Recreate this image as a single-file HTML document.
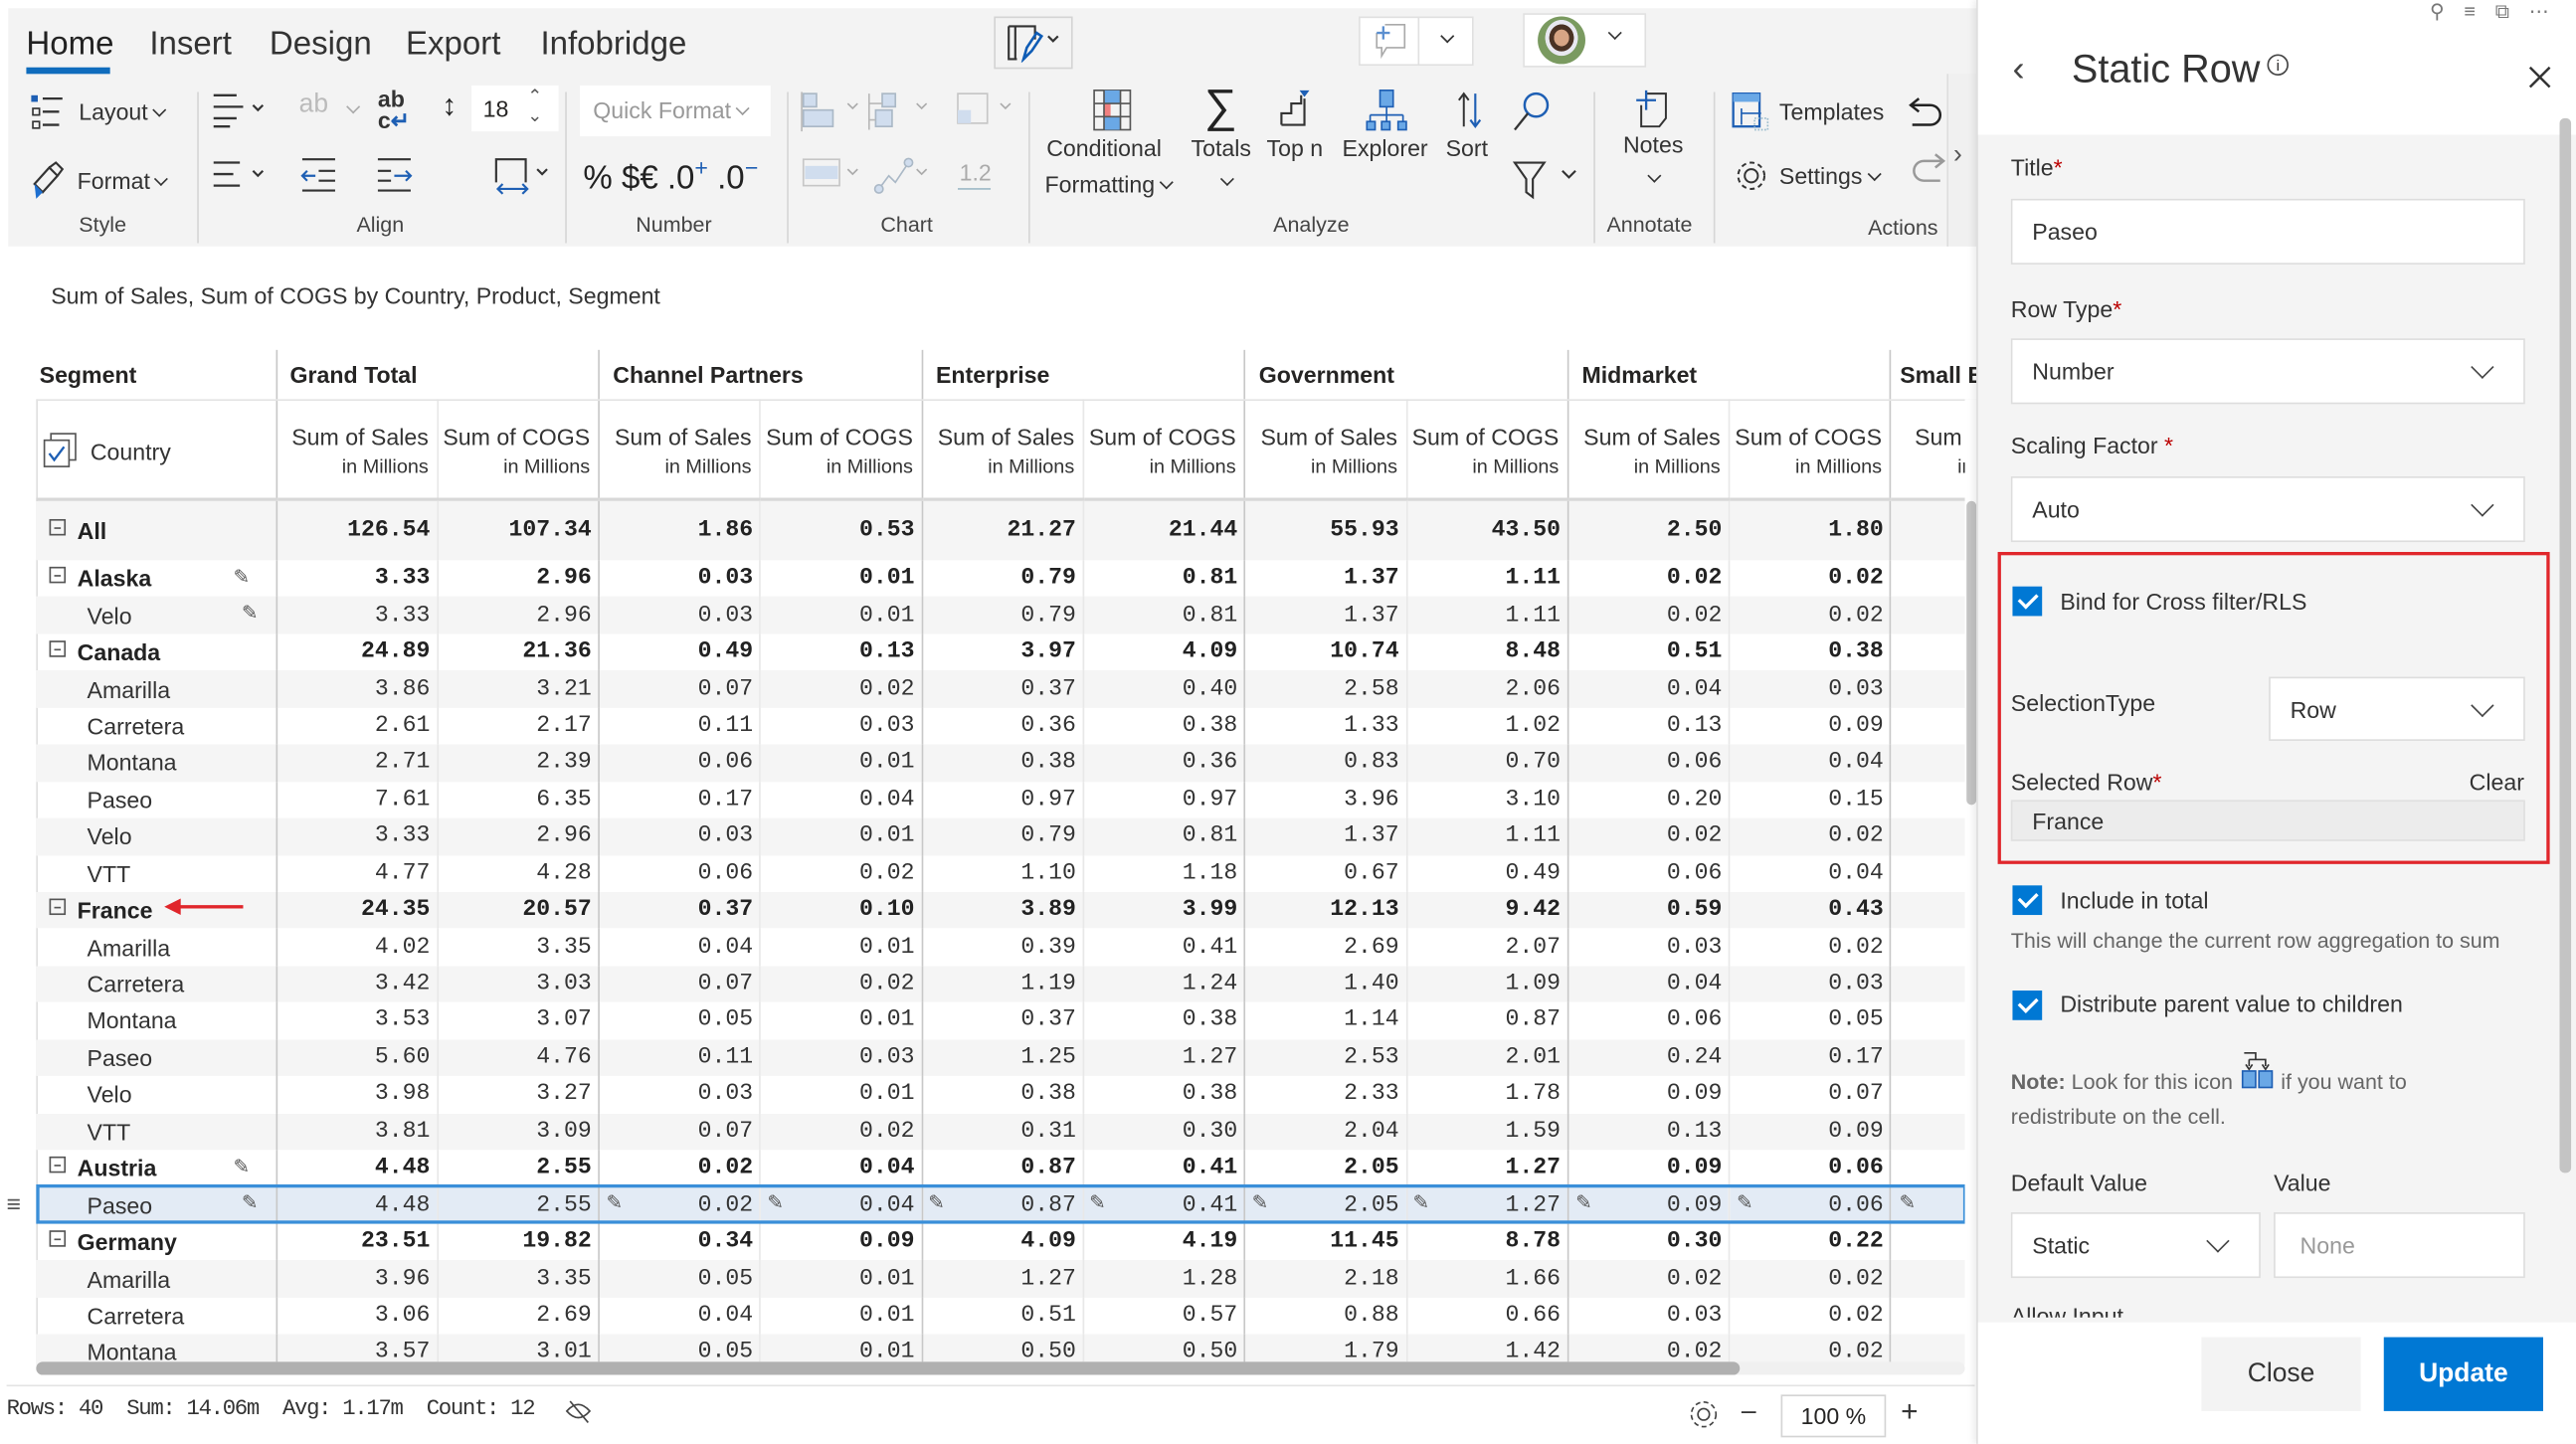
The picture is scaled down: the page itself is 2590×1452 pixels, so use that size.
<!DOCTYPE html>
<html><head><meta charset="utf-8">
<style>
*{box-sizing:border-box;margin:0;padding:0}
html,body{width:2590px;height:1452px;overflow:hidden;background:#fff}
#s{position:absolute;left:0;top:0;width:1568px;height:879px;transform:scale(1.6518);transform-origin:0 0;font-family:"Liberation Sans",sans-serif;color:#252423;background:#fff;overflow:hidden}
.a{position:absolute;white-space:nowrap}
.lbl{font-size:13px;color:#333}
.gl{font-size:13px;color:#444}
.sep{position:absolute;width:1px;background:#d6d6d6;top:56px;height:92px}
.chev{display:inline-block;width:6px;height:6px;border-right:1.3px solid #333;border-bottom:1.3px solid #333;transform:rotate(45deg);margin-left:4px;vertical-align:3px}
table{border-collapse:collapse;table-layout:fixed;position:absolute;left:22px;top:213px}
td{height:22.45px;padding:0 4px 0 0;text-align:right;font-family:"Liberation Mono",monospace;font-size:14px;color:#333;border-left:1px solid #e8e8e8;overflow:hidden;white-space:nowrap}
td.g{border-left:1px solid #c8c8c8}
td.n{text-align:left;font-family:"Liberation Sans",sans-serif;padding-left:31px;border-left:none}
tr.b td{font-weight:bold;color:#222}
tr.b td.n{padding-left:25px}
tr.z td{background:#f5f5f5}
.bx{position:absolute;left:8px;width:10px;height:10px;border:1px solid #555;margin-top:-7px}
.bx:after{content:"";position:absolute;left:2px;top:4px;width:4px;height:1px;background:#555}
td.n{position:relative}
.pen{position:absolute;font-size:12px;color:#555;font-family:"DejaVu Sans",sans-serif;font-weight:normal}
th{font-weight:bold;text-align:left;font-size:14px;height:30px;padding-left:8px;border-left:1px solid #c8c8c8;border-bottom:1px solid #e3e3e3;white-space:nowrap;overflow:hidden}
.sh td{height:61px;font-family:"Liberation Sans",sans-serif;font-size:14px;line-height:17px;border-bottom:2px solid #d8d8d8;vertical-align:middle;padding-right:5px;padding-top:4px}
.sh small{font-size:12px}
.pl{position:absolute;left:1224px;font-size:14px;color:#333}
.req{color:#b00}
.inp{position:absolute;background:#fff;border:1px solid #ddd;font-size:14px;padding-left:12px;display:flex;align-items:center;color:#333}
.dd:after{content:"";position:absolute;right:20px;top:50%;width:9px;height:9px;border-right:1.3px solid #444;border-bottom:1.3px solid #444;transform:translateY(-75%) rotate(45deg)}
.cb{position:absolute;left:1225px;width:18px;height:18px;background:#0078d4}
.cb:after{content:"";position:absolute;left:6px;top:2px;width:5px;height:9px;border-right:2.2px solid #fff;border-bottom:2.2px solid #fff;transform:rotate(45deg)}
</style></head><body><div id="s">

<div class="a" style="left:5px;top:5px;width:1198px;height:145px;background:#f3f3f3"></div>
<div class="a" style="left:16px;top:16px;font-size:20px;color:#222">Home</div>
<div class="a" style="left:16px;top:41px;width:51px;height:4px;background:#0f6cbd"></div>
<div class="a" style="left:91px;top:16px;font-size:20px;color:#333">Insert</div>
<div class="a" style="left:164px;top:16px;font-size:20px;color:#333">Design</div>
<div class="a" style="left:247px;top:16px;font-size:20px;color:#333">Export</div>
<div class="a" style="left:329px;top:16px;font-size:20px;color:#333">Infobridge</div>

<div class="a" style="left:605px;top:10px;width:48px;height:32px;border:1px solid #d4d4d4"></div>
<svg class="a" style="left:613px;top:14px" width="36" height="24"><path d="M1 2h16v8M1 2v20h5M5 2v20" stroke="#333" fill="none" stroke-width="1.3"/><path d="M10 22l2-7 6-9 3 2-6 9z" stroke="#0f5cb5" fill="none" stroke-width="1.6"/><path d="M25 8l3 3 3-3" stroke="#333" fill="none" stroke-width="1.3"/></svg>
<div class="a" style="left:827px;top:10px;width:70px;height:30px;background:#fff;border:1px solid #e0e0e0"></div>
<div class="a" style="left:863px;top:10px;width:1px;height:30px;background:#e0e0e0"></div>
<svg class="a" style="left:834px;top:13px" width="24" height="24"><path d="M9 2h12v14H10l-3 5v-5H4V7" stroke="#aaa" fill="none"/><path d="M8 3v8M4 7h8" stroke="#5b8fd0" stroke-width="1.4"/></svg>
<span class="chev a" style="left:874px;top:19px"></span>
<div class="a" style="left:927px;top:8px;width:75px;height:33px;background:#fff;border:1px solid #e0e0e0"></div>
<div class="a" style="left:936px;top:10px;width:29px;height:29px;border-radius:50%;background:radial-gradient(ellipse at 50% 45%,#d7a585 0 22%,#4a3224 23% 36%,#e8e8f0 37% 48%,#7a9a60 49%)"></div>
<span class="chev a" style="left:976px;top:17px"></span>

<svg class="a" style="left:18px;top:57px" width="24" height="22"><rect x="1" y="1" width="4" height="4" fill="#1e5fb4"/><path d="M8 3h12M8 11h10M8 19h10" stroke="#333" stroke-width="1.4"/><rect x="2" y="9" width="4" height="4" fill="none" stroke="#333"/><rect x="2" y="17" width="4" height="4" fill="none" stroke="#333"/></svg>
<div class="a lbl" style="left:48px;top:60px;font-size:14px">Layout<span class="chev"></span></div>
<svg class="a" style="left:18px;top:98px" width="22" height="24"><path d="M3 14l9-10 5 5-9 10z" fill="none" stroke="#333" stroke-width="1.3"/><path d="M3 14l5 5-4 4z" fill="#1e6fd0"/><path d="M12 4l4-3 4 4-3 4" fill="none" stroke="#333" stroke-width="1.3"/></svg>
<div class="a lbl" style="left:47px;top:102px;font-size:14px">Format<span class="chev"></span></div>
<div class="a gl" style="left:48px;top:129px">Style</div>
<div class="sep" style="left:120px"></div>
<svg class="a" style="left:128px;top:56px" width="40" height="22"><path d="M2 2h14M2 9h18M2 16h14M2 21h10" stroke="#333" stroke-width="1.4"/><path d="M26 8l3 3 3-3" stroke="#333" fill="none" stroke-width="1.3"/></svg>
<div class="a" style="left:182px;top:55px;font-size:16px;color:#bbb">ab</div><span class="a chev" style="left:208px;top:62px;border-color:#aaa"></span>
<div class="a" style="left:230px;top:54px;font-size:14px;color:#333;line-height:13px;font-weight:bold">ab<br>c<span style="color:#1e5fb4">↵</span></div>
<div class="a" style="left:269px;top:54px;font-size:18px;color:#222">↕</div>
<div class="a" style="left:287px;top:52px;width:53px;height:28px;background:#fff"></div>
<div class="a" style="left:294px;top:58px;font-size:14px">18</div>
<div class="a" style="left:321px;top:53px;font-size:11px;color:#555;line-height:12px">⌃<br>⌄</div>
<svg class="a" style="left:128px;top:97px" width="40" height="20"><path d="M2 2h16M2 9h12M2 16h16" stroke="#333" stroke-width="1.4"/><path d="M26 7l3 3 3-3" stroke="#333" fill="none" stroke-width="1.3"/></svg>
<svg class="a" style="left:182px;top:95px" width="24" height="24"><path d="M2 2h20M12 9h10M12 15h10M2 21h20" stroke="#333" stroke-width="1.3"/><path d="M10 12H2m3-3l-3 3 3 3" stroke="#1e5fb4" fill="none" stroke-width="1.3"/></svg>
<svg class="a" style="left:228px;top:95px" width="24" height="24"><path d="M2 2h20M2 9h8M2 15h8M2 21h20" stroke="#333" stroke-width="1.3"/><path d="M12 12h10m-3-3l3 3-3 3" stroke="#1e5fb4" fill="none" stroke-width="1.3"/></svg>
<svg class="a" style="left:300px;top:95px" width="40" height="26"><path d="M2 16V2h18v14" stroke="#333" fill="none" stroke-width="1.3"/><path d="M3 20h18m-15-3l-3 3 3 3m12-6l3 3-3 3" stroke="#1e5fb4" fill="none" stroke-width="1.3"/><path d="M27 8l3 3 3-3" stroke="#333" fill="none" stroke-width="1.3"/></svg>
<div class="a gl" style="left:217px;top:129px">Align</div>
<div class="sep" style="left:344px"></div>
<div class="a" style="left:353px;top:52px;width:116px;height:31px;background:#fff"></div>
<div class="a" style="left:361px;top:59px;font-size:14px;color:#999">Quick Format<span class="chev" style="border-color:#999"></span></div>
<div class="a" style="left:355px;top:94px;font-size:20px;color:#222">% $€ .0<sup style="color:#1e5fb4;font-size:14px">+</sup> .0<sup style="color:#1e5fb4;font-size:14px">−</sup></div>
<div class="a gl" style="left:387px;top:129px">Number</div>
<div class="sep" style="left:479px"></div>
<svg class="a" style="left:487px;top:55px" width="135" height="26" opacity=".8"><rect x="2" y="2" width="8" height="8" fill="#c8d8ee" stroke="#9ab"/><rect x="2" y="12" width="18" height="10" fill="#c8d8ee" stroke="#9ab"/><path d="M1 1v24" stroke="#aaa"/><path d="M29 8l3 3 3-3M71 8l3 3 3-3M122 8l3 3 3-3" stroke="#999" fill="none"/><rect x="50" y="2" width="8" height="8" fill="#c8d8ee" stroke="#9ab"/><rect x="46" y="12" width="10" height="10" fill="#c8d8ee" stroke="#9ab"/><path d="M42 2v22M42 8h8M42 18h4" stroke="#aaa"/><rect x="96" y="2" width="18" height="18" fill="none" stroke="#bbb"/><rect x="96" y="12" width="8" height="8" fill="#c8d8ee"/></svg>
<svg class="a" style="left:487px;top:95px" width="125" height="26" opacity=".8"><rect x="2" y="2" width="22" height="16" fill="none" stroke="#bbb"/><rect x="3" y="6" width="20" height="8" fill="#c8d8ee"/><path d="M29 8l3 3 3-3M71 8l3 3 3-3" stroke="#999" fill="none"/><path d="M48 20l6-8 4 4 8-12" stroke="#9ab" fill="none"/><circle cx="48" cy="20" r="2.5" fill="#c8d8ee" stroke="#9ab"/><circle cx="66" cy="4" r="2.5" fill="#c8d8ee" stroke="#9ab"/><text x="97" y="15" font-size="14" fill="#999" font-family="Liberation Sans">1.2</text><path d="M96 20h20" stroke="#8ab"/></svg>
<div class="a gl" style="left:536px;top:129px">Chart</div>
<div class="sep" style="left:626px"></div>
<svg class="a" style="left:665px;top:54px" width="24" height="26"><rect x="1" y="1" width="22" height="24" fill="none" stroke="#555"/><rect x="7" y="1" width="10" height="8" fill="#6aa8e6"/><rect x="7" y="17" width="10" height="8" fill="#6aa8e6"/><rect x="7" y="9" width="4" height="8" fill="#f08080"/><path d="M1 9h22M1 17h22M7 1v24M17 1v24" stroke="#555"/></svg>
<div class="a lbl" style="left:637px;top:82px;font-size:14px">Conditional</div>
<div class="a lbl" style="left:636px;top:104px;font-size:14px">Formatting<span class="chev"></span></div>
<div class="a" style="left:733px;top:50px;font-size:28px;color:#222;line-height:30px">∑</div>
<div class="a lbl" style="left:725px;top:82px;font-size:14px">Totals</div><span class="a chev" style="left:740px;top:106px"></span>
<svg class="a" style="left:777px;top:54px" width="24" height="26"><path d="M3 22V15h6V9h6V4" stroke="#333" fill="none" stroke-width="1.3"/><path d="M3 22h14V6" stroke="#333" fill="none" stroke-width="1.3"/><path d="M14 1h6l-3 4z" fill="#1e5fb4"/></svg>
<div class="a lbl" style="left:771px;top:82px;font-size:14px">Top n</div>
<svg class="a" style="left:831px;top:54px" width="26" height="26"><rect x="9" y="1" width="8" height="10" fill="#6aa8e6" stroke="#1e5fb4"/><path d="M13 11v5M3 16h20M3 16v4M13 16v4M23 16v4" stroke="#1e5fb4"/><rect x="1" y="20" width="5" height="5" fill="#6aa8e6" stroke="#1e5fb4"/><rect x="10" y="20" width="5" height="5" fill="#6aa8e6" stroke="#1e5fb4"/><rect x="20" y="20" width="5" height="5" fill="#6aa8e6" stroke="#1e5fb4"/></svg>
<div class="a lbl" style="left:817px;top:82px;font-size:14px">Explorer</div>
<svg class="a" style="left:885px;top:55px" width="20" height="24"><path d="M6 22V2M3 6l3-4 3 4" stroke="#333" fill="none" stroke-width="1.2"/><path d="M13 2v20M10 18l3 4 3-4" stroke="#1e5fb4" fill="none" stroke-width="1.3"/></svg>
<div class="a lbl" style="left:880px;top:82px;font-size:14px">Sort</div>
<svg class="a" style="left:920px;top:55px" width="24" height="26"><circle cx="15" cy="9" r="7" fill="none" stroke="#1e5fb4" stroke-width="1.5"/><path d="M10 14L2 24" stroke="#333" stroke-width="1.4"/></svg>
<svg class="a" style="left:920px;top:96px" width="44" height="26"><path d="M2 3h18l-7 10v11l-4-3v-8z" fill="none" stroke="#333" stroke-width="1.3"/><path d="M31 8l4 4 4-4" stroke="#333" fill="none" stroke-width="1.3"/></svg>
<div class="a gl" style="left:775px;top:129px">Analyze</div>
<div class="sep" style="left:970px"></div>
<svg class="a" style="left:995px;top:54px" width="22" height="26"><path d="M7 3h12v15l-4 5H4V10" stroke="#333" fill="none" stroke-width="1.2"/><path d="M7 1v12M1 7h12" stroke="#1e5fb4" stroke-width="1.4"/></svg>
<div class="a lbl" style="left:988px;top:80px;font-size:14px">Notes</div><span class="a chev" style="left:1000px;top:104px"></span>
<div class="a gl" style="left:978px;top:129px">Annotate</div>
<div class="sep" style="left:1043px"></div>
<svg class="a" style="left:1054px;top:56px" width="24" height="24"><rect x="1" y="1" width="16" height="20" fill="none" stroke="#1e5fb4" stroke-width="1.4"/><rect x="1" y="1" width="16" height="5" fill="#6aa8e6"/><path d="M6 10v10M6 13h12" stroke="#1e5fb4"/><path d="M14 16h8v7h-8z" fill="none" stroke="#9bc" stroke-dasharray="1 1"/></svg>
<div class="a lbl" style="left:1083px;top:60px;font-size:14px">Templates</div>
<svg class="a" style="left:1055px;top:96px" width="22" height="22"><circle cx="11" cy="11" r="4" fill="none" stroke="#333" stroke-width="1.2"/><circle cx="11" cy="11" r="8" fill="none" stroke="#333" stroke-width="1.2" stroke-dasharray="3 2.2"/></svg>
<div class="a lbl" style="left:1083px;top:99px;font-size:14px">Settings<span class="chev"></span></div>
<svg class="a" style="left:1160px;top:56px" width="26" height="62"><path d="M8 4L3 8l5 4M3 8h12a6 6 0 0 1 0 12H4" stroke="#222" fill="none" stroke-width="1.5"/><path d="M18 38l5 4-5 4M23 42H11a6 6 0 0 0 0 12h10" stroke="#999" fill="none" stroke-width="1.5"/></svg>
<div class="a gl" style="left:1137px;top:131px">Actions</div>
<div class="a" style="left:1185px;top:45px;width:18px;height:105px;background:#f0f0f0;border-left:1px solid #ddd"></div>
<div class="a" style="left:1189px;top:86px;font-size:16px;color:#555">›</div>

<div class="a" style="left:31px;top:172px;font-size:14px;color:#333">Sum of Sales, Sum of COGS by Country, Product, Segment</div>

<div class="a" style="left:22px;top:243px;width:1px;height:588px;background:#e0e0e0"></div>
<table>
<colgroup><col style="width:146px"><col style="width:98.3px"><col style="width:98.3px"><col style="width:98.3px"><col style="width:98.3px"><col style="width:98.3px"><col style="width:98.3px"><col style="width:98.3px"><col style="width:98.3px"><col style="width:98.3px"><col style="width:98.3px"><col style="width:60px"></colgroup>
<tr><th style="border-left:none;padding-left:2px">Segment</th><th colspan="2">Grand Total</th><th colspan="2">Channel Partners</th><th colspan="2">Enterprise</th><th colspan="2">Government</th><th colspan="2">Midmarket</th><th style="padding-left:5px">Small B</th></tr>
<tr class="sh"><td class="n" style="padding-left:33px;font-size:14px;border-bottom:2px solid #d8d8d8"><svg style="position:absolute;left:4px;top:19px" width="22" height="24"><rect x="5" y="1" width="15" height="16" fill="#fff" stroke="#555"/><rect x="1" y="5" width="15" height="16" fill="#fff" stroke="#555"/><path d="M4 13l3 4 6-8" stroke="#1e5fb4" fill="none" stroke-width="1.4"/></svg>Country</td>
<td class="g">Sum of Sales<br><small>in Millions</small></td><td>Sum of COGS<br><small>in Millions</small></td>
<td class="g">Sum of Sales<br><small>in Millions</small></td><td>Sum of COGS<br><small>in Millions</small></td>
<td class="g">Sum of Sales<br><small>in Millions</small></td><td>Sum of COGS<br><small>in Millions</small></td>
<td class="g">Sum of Sales<br><small>in Millions</small></td><td>Sum of COGS<br><small>in Millions</small></td>
<td class="g">Sum of Sales<br><small>in Millions</small></td><td>Sum of COGS<br><small>in Millions</small></td>
<td class="g" style="text-align:left;padding-left:14px">Sum o<br><small style="padding-left:26px">in</small></td></tr>
<tr class="b z"><td class="n" style="height:37px"><span class="bx" style="top:50%"></span>All</td><td class="g">126.54</td><td>107.34</td><td class="g">1.86</td><td>0.53</td><td class="g">21.27</td><td>21.44</td><td class="g">55.93</td><td>43.50</td><td class="g">2.50</td><td>1.80</td><td class="g"></td></tr>
<tr class="b"><td class="n"><span class="bx" style="top:50%"></span>Alaska<span class="pen" style="left:120px;top:3px">✎</span></td><td class="g">3.33</td><td>2.96</td><td class="g">0.03</td><td>0.01</td><td class="g">0.79</td><td>0.81</td><td class="g">1.37</td><td>1.11</td><td class="g">0.02</td><td>0.02</td><td class="g"></td></tr>
<tr class="z"><td class="n">Velo<span class="pen" style="left:125px;top:3px">✎</span></td><td class="g">3.33</td><td>2.96</td><td class="g">0.03</td><td>0.01</td><td class="g">0.79</td><td>0.81</td><td class="g">1.37</td><td>1.11</td><td class="g">0.02</td><td>0.02</td><td class="g"></td></tr>
<tr class="b"><td class="n"><span class="bx" style="top:50%"></span>Canada</td><td class="g">24.89</td><td>21.36</td><td class="g">0.49</td><td>0.13</td><td class="g">3.97</td><td>4.09</td><td class="g">10.74</td><td>8.48</td><td class="g">0.51</td><td>0.38</td><td class="g"></td></tr>
<tr class="z"><td class="n">Amarilla</td><td class="g">3.86</td><td>3.21</td><td class="g">0.07</td><td>0.02</td><td class="g">0.37</td><td>0.40</td><td class="g">2.58</td><td>2.06</td><td class="g">0.04</td><td>0.03</td><td class="g"></td></tr>
<tr><td class="n">Carretera</td><td class="g">2.61</td><td>2.17</td><td class="g">0.11</td><td>0.03</td><td class="g">0.36</td><td>0.38</td><td class="g">1.33</td><td>1.02</td><td class="g">0.13</td><td>0.09</td><td class="g"></td></tr>
<tr class="z"><td class="n">Montana</td><td class="g">2.71</td><td>2.39</td><td class="g">0.06</td><td>0.01</td><td class="g">0.38</td><td>0.36</td><td class="g">0.83</td><td>0.70</td><td class="g">0.06</td><td>0.04</td><td class="g"></td></tr>
<tr><td class="n">Paseo</td><td class="g">7.61</td><td>6.35</td><td class="g">0.17</td><td>0.04</td><td class="g">0.97</td><td>0.97</td><td class="g">3.96</td><td>3.10</td><td class="g">0.20</td><td>0.15</td><td class="g"></td></tr>
<tr class="z"><td class="n">Velo</td><td class="g">3.33</td><td>2.96</td><td class="g">0.03</td><td>0.01</td><td class="g">0.79</td><td>0.81</td><td class="g">1.37</td><td>1.11</td><td class="g">0.02</td><td>0.02</td><td class="g"></td></tr>
<tr><td class="n">VTT</td><td class="g">4.77</td><td>4.28</td><td class="g">0.06</td><td>0.02</td><td class="g">1.10</td><td>1.18</td><td class="g">0.67</td><td>0.49</td><td class="g">0.06</td><td>0.04</td><td class="g"></td></tr>
<tr class="b z"><td class="n"><span class="bx" style="top:50%"></span>France</td><td class="g">24.35</td><td>20.57</td><td class="g">0.37</td><td>0.10</td><td class="g">3.89</td><td>3.99</td><td class="g">12.13</td><td>9.42</td><td class="g">0.59</td><td>0.43</td><td class="g"></td></tr>
<tr><td class="n">Amarilla</td><td class="g">4.02</td><td>3.35</td><td class="g">0.04</td><td>0.01</td><td class="g">0.39</td><td>0.41</td><td class="g">2.69</td><td>2.07</td><td class="g">0.03</td><td>0.02</td><td class="g"></td></tr>
<tr class="z"><td class="n">Carretera</td><td class="g">3.42</td><td>3.03</td><td class="g">0.07</td><td>0.02</td><td class="g">1.19</td><td>1.24</td><td class="g">1.40</td><td>1.09</td><td class="g">0.04</td><td>0.03</td><td class="g"></td></tr>
<tr><td class="n">Montana</td><td class="g">3.53</td><td>3.07</td><td class="g">0.05</td><td>0.01</td><td class="g">0.37</td><td>0.38</td><td class="g">1.14</td><td>0.87</td><td class="g">0.06</td><td>0.05</td><td class="g"></td></tr>
<tr class="z"><td class="n">Paseo</td><td class="g">5.60</td><td>4.76</td><td class="g">0.11</td><td>0.03</td><td class="g">1.25</td><td>1.27</td><td class="g">2.53</td><td>2.01</td><td class="g">0.24</td><td>0.17</td><td class="g"></td></tr>
<tr><td class="n">Velo</td><td class="g">3.98</td><td>3.27</td><td class="g">0.03</td><td>0.01</td><td class="g">0.38</td><td>0.38</td><td class="g">2.33</td><td>1.78</td><td class="g">0.09</td><td>0.07</td><td class="g"></td></tr>
<tr class="z"><td class="n">VTT</td><td class="g">3.81</td><td>3.09</td><td class="g">0.07</td><td>0.02</td><td class="g">0.31</td><td>0.30</td><td class="g">2.04</td><td>1.59</td><td class="g">0.13</td><td>0.09</td><td class="g"></td></tr>
<tr class="b"><td class="n"><span class="bx" style="top:50%"></span>Austria<span class="pen" style="left:120px;top:3px">✎</span></td><td class="g">4.48</td><td>2.55</td><td class="g">0.02</td><td>0.04</td><td class="g">0.87</td><td>0.41</td><td class="g">2.05</td><td>1.27</td><td class="g">0.09</td><td>0.06</td><td class="g"></td></tr>
<tr class="sel"><td class="n" style="background:#e3ebf5">Paseo<span class="pen" style="left:125px;top:3px">✎</span></td><td class="g" style="background:#e3ebf5">4.48</td><td style="background:#e3ebf5">2.55</td><td class="g" style="background:#e3ebf5">0.02</td><td style="background:#e3ebf5">0.04</td><td class="g" style="background:#e3ebf5">0.87</td><td style="background:#e3ebf5">0.41</td><td class="g" style="background:#e3ebf5">2.05</td><td style="background:#e3ebf5">1.27</td><td class="g" style="background:#e3ebf5">0.09</td><td style="background:#e3ebf5">0.06</td><td class="g" style="background:#e3ebf5"></td></tr>
<tr class="b"><td class="n"><span class="bx" style="top:50%"></span>Germany</td><td class="g">23.51</td><td>19.82</td><td class="g">0.34</td><td>0.09</td><td class="g">4.09</td><td>4.19</td><td class="g">11.45</td><td>8.78</td><td class="g">0.30</td><td>0.22</td><td class="g"></td></tr>
<tr class="z"><td class="n">Amarilla</td><td class="g">3.96</td><td>3.35</td><td class="g">0.05</td><td>0.01</td><td class="g">1.27</td><td>1.28</td><td class="g">2.18</td><td>1.66</td><td class="g">0.02</td><td>0.02</td><td class="g"></td></tr>
<tr><td class="n">Carretera</td><td class="g">3.06</td><td>2.69</td><td class="g">0.04</td><td>0.01</td><td class="g">0.51</td><td>0.57</td><td class="g">0.88</td><td>0.66</td><td class="g">0.03</td><td>0.02</td><td class="g"></td></tr>
<tr class="z"><td class="n">Montana</td><td class="g">3.57</td><td>3.01</td><td class="g">0.05</td><td>0.01</td><td class="g">0.50</td><td>0.50</td><td class="g">1.79</td><td>1.42</td><td class="g">0.02</td><td>0.02</td><td class="g"></td></tr>
</table>
<div class="a" style="left:22px;top:721px;width:1175px;height:24px;border:2px solid #3a8fd9"></div>
<div class="a" style="left:4px;top:725px;font-size:15px;color:#555">≡</div>
<span class="a pen" style="left:369px;top:725px">✎</span><span class="a pen" style="left:467px;top:725px">✎</span><span class="a pen" style="left:565px;top:725px">✎</span><span class="a pen" style="left:663px;top:725px">✎</span><span class="a pen" style="left:762px;top:725px">✎</span><span class="a pen" style="left:860px;top:725px">✎</span><span class="a pen" style="left:959px;top:725px">✎</span><span class="a pen" style="left:1057px;top:725px">✎</span><span class="a pen" style="left:1156px;top:725px">✎</span>
<svg class="a" style="left:98px;top:545px" width="52" height="14"><path d="M50 7H10" stroke="#e0262b" stroke-width="2"/><path d="M2 7l10-5v10z" fill="#e0262b"/></svg>
<div class="a" style="left:1196px;top:243px;width:9px;height:600px;background:#fff"></div>
<div class="a" style="left:1197px;top:305px;width:6px;height:185px;background:#c4c4c4;border-radius:3px"></div>
<div class="a" style="left:22px;top:831px;width:1175px;height:12px;background:#fff"></div>
<div class="a" style="left:22px;top:829px;width:1174px;height:8px;background:#f0f0f0;border-radius:4px"></div>
<div class="a" style="left:22px;top:829px;width:1037px;height:8px;background:#b0b0b0;border-radius:4px"></div>
<div class="a" style="left:4px;top:843px;width:1198px;height:1px;background:#e4e4e4"></div>
<div class="a" style="left:4px;top:851px;font-size:13.5px;color:#333;font-family:'Liberation Mono',monospace;letter-spacing:-0.8px">Rows: 40 &nbsp;Sum: 14.06m &nbsp;Avg: 1.17m &nbsp;Count: 12</div>
<svg class="a" style="left:344px;top:852px" width="16" height="15"><path d="M1 7q7-8 14 0q-7 8-14 0z" fill="none" stroke="#444"/><path d="M3 1l11 13" stroke="#444"/></svg>
<svg class="a" style="left:1027px;top:851px" width="20" height="20"><circle cx="10" cy="10" r="3.5" fill="none" stroke="#444"/><circle cx="10" cy="10" r="7.5" fill="none" stroke="#444" stroke-dasharray="3 2"/></svg>
<div class="a" style="left:1060px;top:851px;font-size:16px;color:#333">–</div>
<div class="a" style="left:1084px;top:849px;width:64px;height:26px;border:1px solid #d4d4d4;font-size:14px;text-align:center;line-height:24px">100 %</div>
<div class="a" style="left:1157px;top:849px;font-size:18px;color:#333">+</div>

<div class="a" style="left:1203px;top:0;width:365px;height:879px;background:#f4f4f4;border-left:1px solid #ddd;box-shadow:-2px 0 4px rgba(0,0,0,.08)"></div>
<div class="a" style="left:1204px;top:0;width:364px;height:82px;background:#fff"></div>
<div class="a" style="left:1204px;top:805px;width:364px;height:74px;background:#fff"></div>
<div class="a" style="left:1479px;top:0;font-size:12px;color:#777;letter-spacing:12px">⚲≡⧉⋯</div>
<div class="a" style="left:1225px;top:29px;font-size:22px;color:#444">‹</div>
<div class="a" style="left:1261px;top:29px;font-size:24px;color:#333">Static Row</div>
<div class="a" style="left:1380px;top:33px;width:13px;height:13px;border:1px solid #444;border-radius:50%;font-size:9px;text-align:center;line-height:12px">i</div>
<svg class="a" style="left:1539px;top:40px" width="14" height="14"><path d="M1 1l12 12M13 1L1 13" stroke="#333" stroke-width="1.5"/></svg>
<div class="a" style="left:1558px;top:72px;width:7px;height:642px;background:#c4c4c4;border-radius:3px"></div>

<div class="pl a" style="top:94px">Title<span class="req">*</span></div>
<div class="inp" style="left:1224px;top:121px;width:313px;height:40px">Paseo</div>
<div class="pl a" style="top:180px">Row Type<span class="req">*</span></div>
<div class="inp dd" style="left:1224px;top:206px;width:313px;height:40px">Number</div>
<div class="pl a" style="top:263px">Scaling Factor <span class="req">*</span></div>
<div class="inp dd" style="left:1224px;top:290px;width:313px;height:40px">Auto</div>
<div class="a" style="left:1216px;top:336px;width:336px;height:190px;border:2px solid #e0262b"></div>
<div class="cb" style="top:357px"></div>
<div class="a" style="left:1254px;top:358px;font-size:14px;color:#333">Bind for Cross filter/RLS</div>
<div class="pl a" style="top:420px">SelectionType</div>
<div class="inp dd" style="left:1381px;top:412px;width:156px;height:39px">Row</div>
<div class="pl a" style="top:468px">Selected Row<span class="req">*</span></div>
<div class="a" style="left:1503px;top:468px;font-size:14px;color:#333">Clear</div>
<div class="inp" style="left:1224px;top:487px;width:313px;height:25px;background:#ececec;border-color:#e0e0e0">France</div>
<div class="cb" style="top:539px"></div>
<div class="a" style="left:1254px;top:540px;font-size:14px;color:#333">Include in total</div>
<div class="a" style="left:1224px;top:565px;font-size:13px;color:#666">This will change the current row aggregation to sum</div>
<div class="cb" style="top:603px"></div>
<div class="a" style="left:1254px;top:603px;font-size:14px;color:#333">Distribute parent value to children</div>
<div class="a" style="left:1224px;top:651px;font-size:13px;color:#666"><b>Note:</b> Look for this icon <span style="display:inline-block;width:22px"></span> if you want to</div>
<svg class="a" style="left:1364px;top:640px" width="24" height="24"><path d="M2 1h7v4M5 5h10v4M5 5v4" stroke="#333" fill="none"/><path d="M3 8l2 3 2-3M13 8l2 3 2-3" stroke="#333" fill="none"/><rect x="1" y="12" width="8" height="10" fill="#6aa8e6" stroke="#1e5fb4"/><rect x="11" y="12" width="8" height="10" fill="#6aa8e6" stroke="#1e5fb4"/></svg>
<div class="a" style="left:1224px;top:672px;font-size:13px;color:#666">redistribute on the cell.</div>
<div class="pl a" style="top:712px">Default Value</div>
<div class="a" style="left:1384px;top:712px;font-size:14px;color:#333">Value</div>
<div class="inp dd" style="left:1224px;top:738px;width:152px;height:40px">Static</div>
<div class="inp" style="left:1384px;top:738px;width:153px;height:40px;color:#999;padding-left:15px">None</div>
<div class="a" style="left:1224px;top:790px;width:100px;height:12px;overflow:hidden;font-size:14px;color:#333;line-height:22px">Allow Input</div>
<div class="a" style="left:1340px;top:814px;width:97px;height:45px;background:#f3f3f3;font-size:16px;text-align:center;line-height:45px;color:#333">Close</div>
<div class="a" style="left:1451px;top:814px;width:97px;height:45px;background:#0078d4;font-size:16px;font-weight:bold;text-align:center;line-height:45px;color:#fff">Update</div>
</div></body></html>
